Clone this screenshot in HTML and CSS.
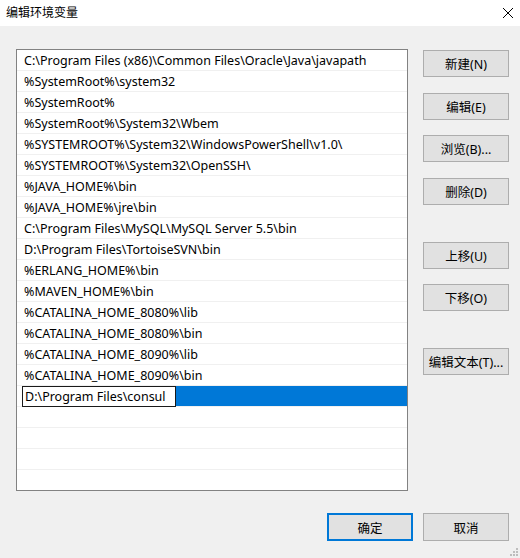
FILE: index.html
```html
<!DOCTYPE html>
<html lang="zh-CN">
<head>
<meta charset="utf-8">
<title>编辑环境变量</title>
<link rel="stylesheet" href="styles.css">
</head>
<body>
<div class="window">
  <div class="titlebar">
    <span class="title">编辑环境变量</span>
    <svg class="close" width="12" height="12" viewBox="0 0 12 12"><path d="M1 1 L11 11 M11 1 L1 11" stroke="#000" stroke-width="1" fill="none"/></svg>
  </div>
  <div class="content">
    <div class="main">
      <div class="list">
        <div class="row">C:\Program Files (x86)\Common Files\Oracle\Java\javapath</div>
        <div class="row">%SystemRoot%\system32</div>
        <div class="row">%SystemRoot%</div>
        <div class="row">%SystemRoot%\System32\Wbem</div>
        <div class="row">%SYSTEMROOT%\System32\WindowsPowerShell\v1.0\</div>
        <div class="row">%SYSTEMROOT%\System32\OpenSSH\</div>
        <div class="row">%JAVA_HOME%\bin</div>
        <div class="row">%JAVA_HOME%\jre\bin</div>
        <div class="row">C:\Program Files\MySQL\MySQL Server 5.5\bin</div>
        <div class="row">D:\Program Files\TortoiseSVN\bin</div>
        <div class="row">%ERLANG_HOME%\bin</div>
        <div class="row">%MAVEN_HOME%\bin</div>
        <div class="row">%CATALINA_HOME_8080%\lib</div>
        <div class="row">%CATALINA_HOME_8080%\bin</div>
        <div class="row">%CATALINA_HOME_8090%\lib</div>
        <div class="row">%CATALINA_HOME_8090%\bin</div>
        <div class="row row-edit"><span class="editbox">D:\Program Files\consul</span><span class="selfill"></span></div>
        <div class="row"></div>
        <div class="row"></div>
        <div class="row"></div>
        <div class="row row-last"></div>
      </div>
      <div class="side">
        <button class="btn b-new">新建(N)</button>
        <button class="btn b-edit">编辑(E)</button>
        <button class="btn b-browse">浏览(B)...</button>
        <button class="btn b-del">删除(D)</button>
        <button class="btn b-up">上移(U)</button>
        <button class="btn b-down">下移(O)</button>
        <button class="btn b-text">编辑文本(T)...</button>
      </div>
    </div>
    <div class="footer">
      <button class="btn btn-default">确定</button>
      <button class="btn">取消</button>
    </div>
  </div>
  <svg class="grip" width="10" height="10" viewBox="0 0 10 10">
    <g fill="#bdbdbd">
      <rect x="7" y="1" width="2" height="2"/>
      <rect x="4" y="4" width="2" height="2"/><rect x="7" y="4" width="2" height="2"/>
      <rect x="1" y="7" width="2" height="2"/><rect x="4" y="7" width="2" height="2"/><rect x="7" y="7" width="2" height="2"/>
    </g>
  </svg>
</div>
</body>
</html>
```
FILE: styles.css
```css
* { box-sizing: border-box; }
html, body { margin: 0; padding: 0; }
body {
  width: 520px;
  height: 558px;
  overflow: hidden;
  background: #f0f0f0;
  font-family: "Noto Sans", "Noto Sans CJK SC", sans-serif;
  font-size: 12.5px;
  color: #000;
}
.window { position: relative; width: 520px; height: 558px; }
.titlebar {
  height: 26px;
  background: #fff;
  display: flex;
  align-items: center;
  justify-content: space-between;
  padding: 0 6px 0 6px;
}
.title { font-size: 12px; line-height: 26px; }
.content { padding: 23px 0 0 16px; }
.main { display: flex; align-items: flex-start; }
.list {
  width: 392px;
  height: 442px;
  border: 1px solid #828282;
  background: #fff;
  overflow: hidden;
}
.row {
  height: 21px;
  line-height: 20px;
  padding-top: 1px;
  border-bottom: 1px solid #f0f0f0;
  padding-left: 7px;
  white-space: nowrap;
  display: flex;
  color: #000;
}
.row-last { border-bottom: none; }
.row-edit { padding-left: 5px; padding-top: 0; }
.editbox {
  width: 154px;
  height: 21px;
  border: 1px solid #1a1a1a;
  background: #fff;
  padding-left: 2px;
  line-height: 19px;
}
.selfill { flex: 1; height: 20px; background: #0078d7; }
.side {
  display: flex;
  flex-direction: column;
  margin-left: 15px;
  padding-top: 1px;
}
.btn {
  width: 86px;
  height: 27px;
  background: #e1e1e1;
  border: 1px solid #adadad;
  font-family: "Noto Sans", "Noto Sans CJK SC", sans-serif;
  font-size: 12.5px;
  color: #000;
  padding: 0;
  margin: 0;
}
.b-edit { margin-top: 16px; }
.b-browse { margin-top: 15px; }
.b-del { margin-top: 16px; }
.b-up { margin-top: 37px; }
.b-down { margin-top: 15px; }
.b-text { margin-top: 37px; }
.footer {
  display: flex;
  justify-content: flex-end;
  gap: 10px;
  margin-top: 22px;
  padding-right: 11px;
}
.footer .btn { height: 28px; }
.btn-default { border: 2px solid #0078d7; }
.grip { position: absolute; right: 1px; bottom: 1px; }
```
